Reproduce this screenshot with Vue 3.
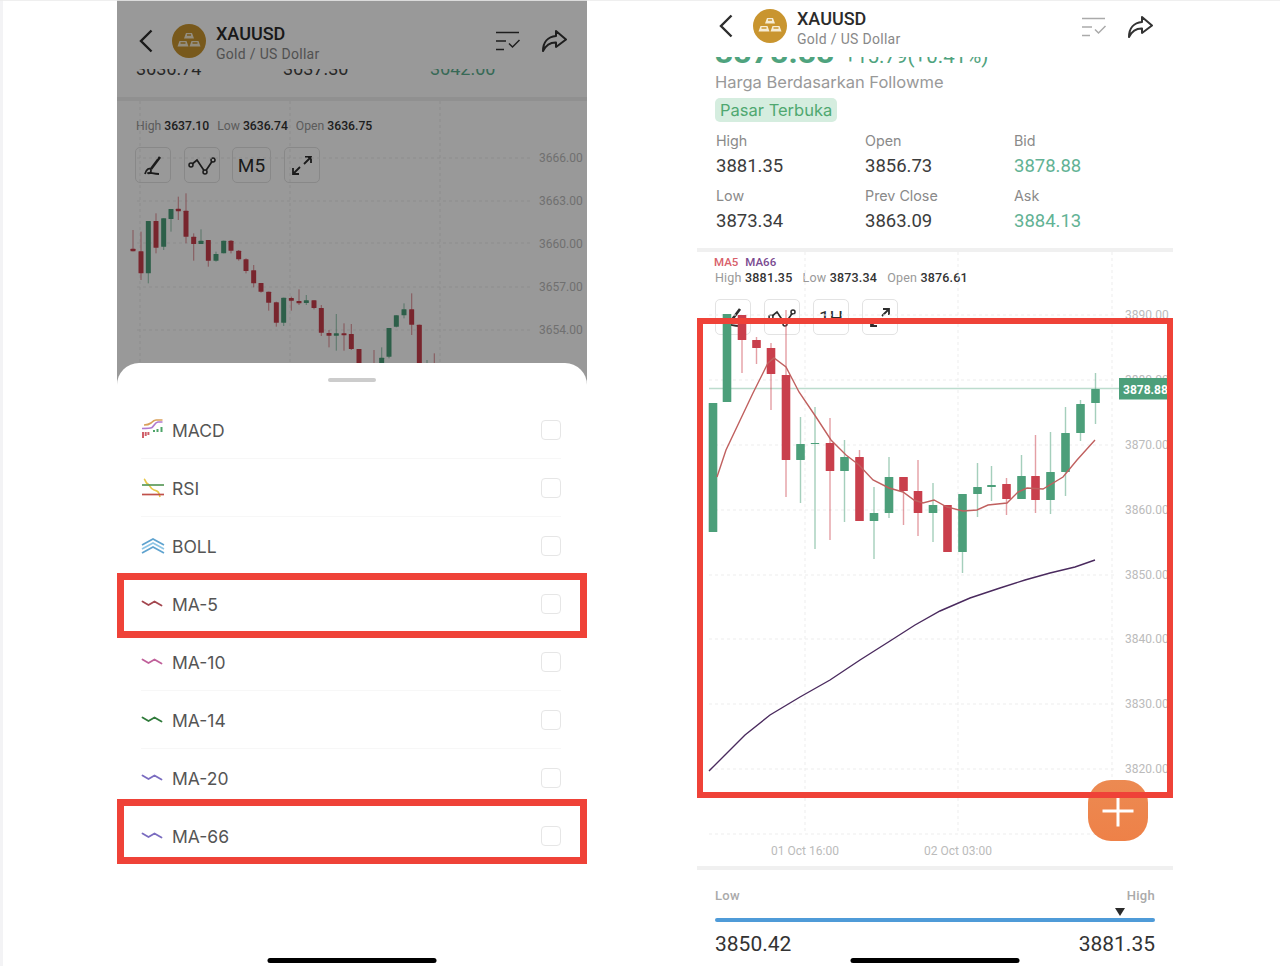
<template>
  <div class="page">
    <svg class="defs" aria-hidden="true">
      <symbol id="i-back" viewBox="0 0 14 24">
        <path d="M12.5 1.500 2 12l10.500 10.500" fill="none" stroke="currentColor" stroke-width="2.400" />
      </symbol>
      <symbol id="i-logo" viewBox="0 0 34 34">
        <circle cx="17" cy="17" r="17" fill="#c9952f" />
        <path d="M14 9h6l2 5.500H12z M7.500 17h7l2 5.500H5.500z M19.500 17h7l2 5.500h-11z" fill="#f6ecd4" />
        <path d="M15 11h4 M8.500 19h5 M20.500 19h5" stroke="#c9952f" stroke-width="1.400" />
      </symbol>
      <symbol id="i-list" viewBox="0 0 26 20">
        <path d="M1 1.500h23 M1 10h10 M1 18.500h8" fill="none" stroke="currentColor" stroke-width="1.700" />
        <path d="m14 12.500 3.500 3.500 7-7" fill="none" stroke="currentColor" stroke-width="1.500" />
      </symbol>
      <symbol id="i-share" viewBox="0 0 26 24">
        <path d="M15 2 25 10.500 15 18v-4.500C9 13.300 5 16 2 22 2 13 7 7.800 15 7z" fill="none" stroke="currentColor" stroke-width="2" stroke-linejoin="round" />
      </symbol>
      <symbol id="i-pen" viewBox="0 0 36 36">
        <path d="m25 10-9 12" fill="none" stroke="currentColor" stroke-width="2.600" />
        <path d="M10 27c1-5 5-7 6-4 .5 3-3 4-3 3 2-1 5 1 11 1" fill="none" stroke="currentColor" stroke-width="1.800" />
      </symbol>
      <symbol id="i-trend" viewBox="0 0 36 36">
        <path d="M7 18 13 13 21 25 29 13" fill="none" stroke="currentColor" stroke-width="1.700" />
        <circle cx="7" cy="18" r="2" fill="#fff" stroke="currentColor" stroke-width="1.500" />
        <circle cx="21" cy="25" r="2" fill="#fff" stroke="currentColor" stroke-width="1.500" />
        <circle cx="29" cy="13" r="2" fill="#fff" stroke="currentColor" stroke-width="1.500" />
      </symbol>
      <symbol id="i-expand" viewBox="0 0 36 36">
        <path d="M20 17 27 10 M21 10h6v6 M16 20l-7 7 M9 21v6h6" fill="none" stroke="currentColor" stroke-width="1.800" />
      </symbol>
    </svg>

    <!-- indicator picker -->
    <section class="phone">
      <div class="under">
        <header class="bar bar-tall">
          <svg class="back"><use href="#i-back" /></svg>
          <svg class="logo logo-tight"><use href="#i-logo" /></svg>
          <div class="title">
            <strong>XAUUSD</strong>
            <span>Gold / US Dollar</span>
          </div>
          <svg class="act act-list"><use href="#i-list" /></svg>
          <svg class="act"><use href="#i-share" /></svg>
        </header>
        <div class="clip-row">
          <span>3636.74</span>
          <span>3637.30</span>
          <span class="up">3642.00</span>
        </div>
        <div class="rule"></div>
        <div class="ohlc ohlc-left">
          <span>High <b>3637.10</b></span>
          <span>Low <b>3636.74</b></span>
          <span>Open <b>3636.75</b></span>
        </div>
        <div class="tools tools-left">
          <span class="tool"><svg><use href="#i-pen" /></svg></span>
          <span class="tool"><svg><use href="#i-trend" /></svg></span>
          <span class="tool tool-text">M5</span>
          <span class="tool"><svg><use href="#i-expand" /></svg></span>
        </div>
        <svg class="plot" viewBox="117 0 470 387">
          <g class="grid">
            <path v-for="y in [158, 201, 243, 287, 330]" :key="y" :d="`M137 ${y}H530`" />
            <path v-for="x in [140, 290, 440]" :key="x" :d="`M${x} 101V387`" />
          </g>
          <text v-for="t in leftAxis" :key="t.label" class="axis" x="539" :y="t.y">{{ t.label }}</text>
          <g v-for="c in leftCandles" :key="c.x" :class="c.up ? 'up' : 'down'">
            <rect class="wick" :x="c.x - 0.6" :y="c.wt" width="1.200" :height="c.wb - c.wt" />
            <rect :x="c.x - 2.500" :y="c.top" width="5" :height="c.h" rx="0.5" />
          </g>
        </svg>
        <div class="scrim"></div>
      </div>

      <div class="sheet">
        <div class="handle"></div>
        <div v-for="row in indicators" :key="row.name" class="row" :class="row.mark">
          <div class="row-in">
            <svg class="ind" viewBox="0 0 24 24">
              <g v-if="row.name === 'MACD'" fill="none" stroke-width="1.700">
                <path d="M3 7c3 0 5-.5 7-2 2-2 3-3 5-3h6.500" stroke="#d9a05a" />
                <path d="M1 10.500c4 0 8 0 10-1 2-1.500 3-5 6-5.500h4.500" stroke="#b07ad0" />
                <path d="M2 20v-6 M4.700 18v-4 M7.400 17v-3" stroke="#d0606a" stroke-width="2" />
                <path d="M13 14v-2 M16.500 14v-3 M20.500 14v-5" stroke="#4fa56a" stroke-width="2" />
              </g>
              <g v-else-if="row.name === 'RSI'" fill="none" stroke-width="1.700">
                <path d="M3 3c2 1 1 4 4 5 2 1 2 5 6 6 3 1 5 1 6 7" stroke="#e8c84a" />
                <path d="M1 9h22" stroke="#5a9a5a" />
                <path d="M1 18.500h22" stroke="#c0504a" />
              </g>
              <g v-else-if="row.name === 'BOLL'" fill="none" stroke-width="1.700">
                <path d="m1 11 11-6 11 6" stroke="#5fa3cf" />
                <path d="m1 15 11-6 11 6" stroke="#8ec6e6" />
                <path d="m1 19 11-6 11 6" stroke="#5fa3cf" />
              </g>
              <path v-else d="M1.500 9.500 7.500 13 13.500 9.500 20.500 13.500" fill="none" stroke-width="1.800" stroke-linejoin="round" stroke-linecap="round" :stroke="row.color" />
            </svg>
            <span class="ind-name">{{ row.name }}</span>
            <span class="check"></span>
          </div>
        </div>
      </div>
      <div class="home"></div>
    </section>

    <!-- quote detail -->
    <section class="phone">
      <header class="bar bar-short">
        <svg class="back"><use href="#i-back" /></svg>
        <svg class="logo"><use href="#i-logo" /></svg>
        <div class="title">
          <strong>XAUUSD</strong>
          <span>Gold / US Dollar</span>
        </div>
        <svg class="act act-list act-soft"><use href="#i-list" /></svg>
        <svg class="act"><use href="#i-share" /></svg>
      </header>
      <div class="price">
        <div class="price-in">
          <b>3878.88</b>
          <span>+15.79(+0.41%)</span>
        </div>
      </div>
      <p class="basis">Harga Berdasarkan Followme</p>
      <span class="status">Pasar Terbuka</span>
      <div class="stats">
        <div v-for="s in stats" :key="s.label">
          <label>{{ s.label }}</label>
          <p :class="{ up: s.up }">{{ s.value }}</p>
        </div>
      </div>
      <div class="rule rule-right"></div>

      <div class="chart">
        <div class="legend"><i class="ma5">MA5</i><i class="ma66">MA66</i></div>
        <div class="ohlc">
          <span>High <b>3881.35</b></span>
          <span>Low <b>3873.34</b></span>
          <span>Open <b>3876.61</b></span>
        </div>
        <div class="tools tools-right">
          <span class="tool"><svg><use href="#i-pen" /></svg></span>
          <span class="tool"><svg><use href="#i-trend" /></svg></span>
          <span class="tool tool-text">1H</span>
          <span class="tool"><svg><use href="#i-expand" /></svg></span>
        </div>
        <svg class="plot" viewBox="697 252 476 614">
          <g class="grid">
            <path v-for="t in rightAxis" :key="t.label" :d="`M709 ${t.y}H1115`" />
            <path d="M709 834H1115" />
            <path v-for="x in [805, 958, 1112]" :key="x" :d="`M${x} 252V834`" />
          </g>
          <text v-for="t in rightAxis" :key="t.label" class="axis" x="1125" :y="t.y + 4">{{ t.label }}</text>
          <text class="axis" x="805" y="855" text-anchor="middle">01 Oct 16:00</text>
          <text class="axis" x="958" y="855" text-anchor="middle">02 Oct 03:00</text>
          <path class="last-line" d="M709 388.500H1119" />
          <g v-for="c in rightCandles" :key="c[0]" :class="c[5] ? 'up' : 'down'">
            <rect class="wick" :x="c[0] - 0.7" :y="c[3]" width="1.400" :height="c[4] - c[3]" />
            <rect :x="c[0] - 4.300" :y="c[1]" width="8.600" :height="c[2] - c[1]" rx="0.5" />
          </g>
          <polyline class="line-ma5" :points="ma5" />
          <polyline class="line-ma66" :points="ma66" />
          <rect class="last-tag" x="1119" y="378" width="54" height="21.500" />
          <text class="last-text" x="1123" y="393.500">3878.88</text>
        </svg>
      </div>

      <div class="rule rule-right rule-low"></div>
      <div class="range">
        <div class="range-top"><span>Low</span><span>High</span></div>
        <div class="track">
          <i class="pointer" :style="{ left: pointerLeft }"></i>
        </div>
        <div class="range-values"><span>{{ low }}</span><span>{{ high }}</span></div>
      </div>

      <button class="fab" type="button" aria-label="Add"></button>
      <div class="frame"></div>
      <div class="home"></div>
    </section>
  </div>
</template>

<script setup>
const low = 3850.42;
const high = 3881.35;
const bid = 3878.88;
const pointerLeft = ((bid - low) / (high - low)) * 100 + '%';

const indicators = [
  { name: 'MACD' },
  { name: 'RSI' },
  { name: 'BOLL' },
  { name: 'MA-5', color: '#a3464e', mark: 'mark-a' },
  { name: 'MA-10', color: '#c0609a' },
  { name: 'MA-14', color: '#2f7a3a' },
  { name: 'MA-20', color: '#7a6cc0' },
  { name: 'MA-66', color: '#7a6cc0', mark: 'mark-b' },
];

const stats = [
  { label: 'High', value: '3881.35' },
  { label: 'Open', value: '3856.73' },
  { label: 'Bid', value: '3878.88', up: true },
  { label: 'Low', value: '3873.34' },
  { label: 'Prev Close', value: '3863.09' },
  { label: 'Ask', value: '3884.13', up: true },
];

const leftAxis = [
  { label: '3666.00', y: 162 },
  { label: '3663.00', y: 205 },
  { label: '3660.00', y: 248 },
  { label: '3657.00', y: 291 },
  { label: '3654.00', y: 334 },
];

const rightAxis = [
  { label: '3890.00', y: 315 },
  { label: '3880.00', y: 380 },
  { label: '3870.00', y: 445 },
  { label: '3860.00', y: 510 },
  { label: '3850.00', y: 575 },
  { label: '3840.00', y: 639 },
  { label: '3830.00', y: 704 },
  { label: '3820.00', y: 769 },
];

// x, top, bottom, wick top, wick bottom, up (read off the 3x crop, origin 117,190)
const leftRaw = [
  [48, 176, 184, 120, 184, 0], [72, 184, 250, 125, 270, 0], [94, 93, 250, 93, 280, 1],
  [117, 93, 173, 70, 190, 0], [140, 85, 170, 85, 180, 1], [162, 57, 87, 57, 125, 1],
  [184, 56, 64, 20, 90, 0], [207, 62, 140, 10, 160, 0], [230, 140, 162, 130, 212, 0],
  [252, 152, 162, 118, 162, 1], [274, 150, 212, 150, 230, 0], [297, 192, 212, 185, 215, 1],
  [320, 152, 190, 152, 190, 1], [342, 152, 182, 150, 190, 0], [365, 182, 208, 180, 212, 0],
  [387, 208, 243, 205, 250, 0], [410, 241, 280, 225, 292, 0], [432, 279, 305, 279, 308, 0],
  [455, 305, 338, 305, 362, 0], [478, 337, 398, 335, 410, 0], [500, 323, 398, 323, 408, 1],
  [523, 324, 332, 320, 362, 0], [546, 333, 340, 298, 345, 0], [568, 331, 339, 315, 345, 1],
  [591, 331, 354, 331, 358, 0], [613, 354, 428, 345, 438, 0], [636, 429, 437, 420, 472, 0],
  [658, 430, 437, 372, 482, 1], [681, 430, 433, 400, 482, 0], [703, 432, 477, 402, 480, 0],
  [726, 477, 560, 477, 560, 0], [771, 540, 560, 480, 560, 0], [794, 503, 560, 472, 560, 1],
  [816, 414, 500, 414, 505, 1], [838, 376, 410, 376, 412, 1], [861, 358, 376, 340, 385, 1],
  [884, 358, 404, 310, 435, 0], [907, 404, 560, 404, 560, 0], [930, 540, 560, 510, 560, 1],
  [952, 540, 560, 490, 560, 0],
];
const leftCandles = leftRaw.map(([x, t, b, wt, wb, up]) => ({
  x: 117 + x / 3,
  top: 190 + t / 3,
  h: Math.max((b - t) / 3, 2),
  wt: 190 + wt / 3,
  wb: 190 + wb / 3,
  up,
}));

// x, top, bottom, wick top, wick bottom, up
const rightCandles = [
  [713, 403, 532, 403, 532, 1], [727, 314, 402, 314, 402, 1], [742, 315, 340, 315, 373, 0],
  [756.5, 340, 348, 337, 364, 0], [771, 348, 374, 343, 410, 0], [786, 375, 460, 310, 497, 0],
  [800.5, 444, 460, 417, 503, 1], [815, 443, 444, 407, 549, 1], [830, 443, 471, 418, 540, 0],
  [844.5, 457, 471, 440, 522, 1], [859.5, 457, 521, 450, 521, 0], [874, 513, 521, 487, 559, 1],
  [889, 477, 513, 457, 518, 1], [903.500, 477, 491, 477, 525, 0], [918, 491, 513, 460, 536, 0],
  [933, 505, 513, 483, 542, 1], [947.5, 505, 552, 505, 552, 0], [962.5, 494, 552, 494, 573, 1],
  [977.5, 487, 494, 463, 517, 1], [991.5, 485, 487, 466, 501, 1], [1006.5, 484, 499, 478, 515, 0],
  [1021.5, 476, 499, 455, 499, 1], [1035.5, 476, 500, 435, 513, 0], [1050.5, 472, 500, 432, 514, 1],
  [1065.5, 433, 472, 407, 496, 1], [1080.5, 404, 433, 400, 441, 1], [1095.5, 389, 403, 373, 424, 1],
];

const ma5 = '717,477 726,450 753,393 768,363 774,358 786,367 799,392 816,417 831,440 846,455 859,465 873,480 889,488 903,492 914,500 923,503 934,500 947,507 963,511 977,510 988,505 1007,503 1018,492 1027,488 1043,489 1063,477 1077,460 1095,440';
const ma66 = '709,771 725,755 745,735 770,715 800,697 830,680 860,660 890,641 915,625 940,611 970,598 1000,588 1025,580 1050,573 1075,567 1095,560';
</script>

<style>
html,
body {
  background: #fff;
}
</style>

<style scoped>
.page {
  position: relative;
  width: 1280px;
  height: 966px;
  overflow: hidden;
  display: flex;
  gap: 110px;
  padding-left: 117px;
  box-sizing: border-box;
  background: #fff;
  box-shadow: inset 3px 0 0 #f3f3f5;
  font-family: Roboto, 'Noto Sans', sans-serif;
  color: #333;
}

/* the capture's own hairline along the top */
.page::after {
  content: '';
  position: absolute;
  top: 0;
  left: 0;
  right: 0;
  z-index: 9;
  height: 1px;
  background: rgba(235, 235, 235, 0.8);
}

.defs {
  position: absolute;
  width: 0;
  height: 0;
}

.phone {
  position: relative;
  display: flex;
  flex-direction: column;
  width: 470px;
  height: 966px;
  background: #fff;
}

.phone + .phone {
  width: 476px;
}

.under {
  position: relative;
  height: 387px;
  margin-bottom: -24px;
  overflow: hidden;
  flex: none;
}

.scrim {
  position: absolute;
  inset: 0;
  z-index: 3;
  background: rgba(0, 0, 0, 0.4);
}

.plot {
  position: absolute;
  top: 0;
  left: 0;
  width: 100%;
  height: 100%;
  pointer-events: none;
}

/* header */
.bar {
  display: flex;
  align-items: center;
  box-sizing: border-box;
  padding-left: 22px;
  padding-right: 20px;
  background: #fff;
}

.bar-tall {
  height: 69px;
  padding-top: 13px;
}

.bar-tall .title {
  padding-top: 5px;
}

.bar-short {
  height: 57px;
  align-items: flex-start;
  padding-top: 9px;
}

.back {
  width: 14px;
  height: 24px;
  color: #2e2e2e;
  flex: none;
}

.bar-short .back {
  margin-top: 5px;
}

.logo {
  width: 34px;
  height: 34px;
  margin-left: 20px;
  flex: none;
}

.logo-tight {
  margin-left: 19px;
}

.title {
  display: flex;
  flex-direction: column;
  margin-left: 10px;
  margin-right: auto;
  padding-top: 1px;
}

.title strong {
  font-size: 18px;
  line-height: 18px;
  font-weight: 500;
  color: #2b2b2b;
}

.title span {
  margin-top: 2px;
  font-size: 14px;
  line-height: 18px;
  letter-spacing: 0.3px;
  color: #888;
}

.act {
  width: 26px;
  height: 24px;
  color: #333;
  flex: none;
}

.act-list {
  margin-right: 20px;
}

.bar-short .act {
  margin-top: 6px;
}

.act-soft {
  color: #aaa;
}

.clip-row {
  display: grid;
  grid-template-columns: repeat(3, 147px);
  height: 28px;
  overflow: hidden;
  padding-left: 19px;
  font-size: 18px;
  line-height: 22px;
  color: #444;
}

.clip-row span {
  margin-top: -11px;
}

.clip-row .up {
  color: #5cb090;
}

.rule {
  height: 4px;
  background: #f0f0f0;
}

.rule-right {
  margin-top: 15px;
}

.rule-low {
  margin-top: 0;
}

/* O/H/L line */
.ohlc {
  display: flex;
  gap: 10px;
  padding-left: 18px;
  margin-top: 3px;
  font-size: 12.5px;
  line-height: 14px;
  letter-spacing: 0.2px;
  color: #999;
}

.ohlc-left {
  margin-top: 18px;
  padding-left: 19px;
  gap: 8px;
  font-size: 12.2px;
  letter-spacing: 0;
}

.ohlc b {
  font-weight: 500;
  color: #333;
}

.tools {
  display: flex;
  margin-top: 14px;
  padding-left: 18px;
}

.tools-left {
  gap: 12.5px;
}

.tools-right {
  gap: 13px;
}

.tool {
  display: flex;
  align-items: center;
  justify-content: center;
  width: 36px;
  height: 36px;
  box-sizing: border-box;
  border: 1.5px solid #e3e3e3;
  border-radius: 5px;
  color: #2e2e2e;
  font-size: 19px;
}

.tool svg {
  width: 36px;
  height: 36px;
  flex: none;
}

.tools-left .tool-text {
  width: 39px;
}

/* chart */
.grid path {
  fill: none;
  stroke: #ededed;
  stroke-width: 1;
  stroke-dasharray: 3 3;
}

.axis {
  font-size: 12px;
  fill: #bbb;
}

.wick {
  opacity: 0.5;
}

.up rect {
  fill: #4c9f7a;
}

.down rect {
  fill: #c93f4c;
}

.last-line {
  fill: none;
  stroke: #bcdccd;
  stroke-width: 1.4;
}

.line-ma5 {
  fill: none;
  stroke: #c0605f;
  stroke-width: 1.4;
}

.line-ma66 {
  fill: none;
  stroke: #4a2a5e;
  stroke-width: 1.4;
}

.last-tag {
  fill: #4c9f7a;
}

.last-text {
  font-size: 12px;
  font-weight: 700;
  fill: #fff;
}

/* bottom sheet */
.sheet {
  position: relative;
  z-index: 4;
  flex: 1;
  padding-top: 15px;
  background: #fff;
  border-radius: 22px 22px 0 0;
}

.handle {
  width: 48px;
  height: 4px;
  margin: 0 auto 19px;
  border-radius: 2px;
  background: #ccc;
}

.row {
  position: relative;
  padding: 0 26px 0 24px;
}

.row-in {
  display: flex;
  align-items: center;
  height: 58px;
  box-sizing: border-box;
  border-bottom: 1px solid #f7f7f7;
}

.row:nth-last-child(2) .row-in,
.row:last-child .row-in {
  border-bottom: none;
}

.mark-a::after,
.mark-b::after {
  content: '';
  position: absolute;
  left: 0;
  right: 0;
  border: 7px solid #ef4238;
}

.mark-a::after {
  top: -2px;
  bottom: -5px;
}

.mark-b::after {
  top: -8px;
  bottom: 1px;
}

.ind {
  width: 24px;
  height: 24px;
  flex: none;
}

.ind-name {
  margin-left: 7px;
  margin-right: auto;
  padding-top: 1px;
  font-family: Inter, Roboto, sans-serif;
  font-size: 17.5px;
  color: #555;
}

.check {
  width: 20px;
  height: 20px;
  box-sizing: border-box;
  border: 1.5px solid #e6e6e6;
  border-radius: 4px;
}

/* quote */
.price {
  height: 15px;
  overflow: hidden;
  padding-left: 18px;
}

.price-in {
  display: flex;
  align-items: baseline;
  gap: 10px;
  margin-top: -21px;
  color: #4fa37e;
  line-height: 32px;
}

.price-in b {
  font-size: 32px;
  font-weight: 700;
}

.price-in span {
  font-size: 20.5px;
}

.basis {
  margin: 0;
  padding-left: 18px;
  font-family: Inter, Roboto, sans-serif;
  font-size: 16.5px;
  line-height: 20px;
  color: #999;
}

.status {
  align-self: flex-start;
  margin: 6px 0 0 18px;
  padding: 0 5px;
  height: 24px;
  line-height: 24px;
  border-radius: 5px;
  background: #d5eddf;
  color: #4fa870;
  font-family: Inter, Roboto, sans-serif;
  font-size: 16.5px;
}

.stats {
  display: grid;
  grid-template-columns: 149px 149px 1fr;
  row-gap: 9px;
  margin-top: 10px;
  padding-left: 19px;
}

.stats label {
  display: block;
  font-family: Inter, Roboto, sans-serif;
  font-size: 14.3px;
  line-height: 18px;
  color: #8a8a8a;
}

.stats p {
  margin: 4px 0 0;
  font-size: 18.5px;
  line-height: 24px;
  color: #3c3c3c;
}

.stats p.up {
  color: #62b294;
}

.chart {
  position: relative;
  flex: 1;
  min-height: 0;
  padding-top: 4px;
}

.legend {
  display: flex;
  gap: 7px;
  padding-left: 17px;
  font-size: 11.5px;
  line-height: 12px;
}

.legend i {
  font-style: normal;
  font-weight: 500;
}

.ma5 {
  color: #d8606a;
}

.ma66 {
  color: #7a4a90;
}

.range {
  padding: 19px 18px 0;
  height: 96px;
  box-sizing: border-box;
}

.range-top {
  display: flex;
  justify-content: space-between;
  font-size: 13px;
  line-height: 14px;
  letter-spacing: 0.3px;
  font-weight: 500;
  color: #aaa;
}

.track {
  position: relative;
  height: 4px;
  margin-top: 15px;
  border-radius: 2px;
  background: #4f9bd8;
}

.pointer {
  position: absolute;
  top: -10px;
  margin-left: -5px;
  width: 0;
  height: 0;
  border-style: solid;
  border-width: 8px 5px 0;
  border-color: #2b2b2b transparent transparent;
}

.range-values {
  display: flex;
  justify-content: space-between;
  margin-top: 9px;
  font-size: 21px;
  line-height: 26px;
  color: #333;
}

.fab {
  position: absolute;
  top: 780px;
  right: 25px;
  width: 60px;
  height: 61px;
  padding: 0;
  border: none;
  border-radius: 23px;
  background: linear-gradient(180deg, #ec8a52, #ee8148);
}

.fab::before,
.fab::after {
  content: '';
  position: absolute;
  left: 50%;
  top: 50%;
  background: #fff;
  transform: translate(-50%, -50%);
}

.fab::before {
  width: 31px;
  height: 3px;
}

.fab::after {
  width: 3px;
  height: 31px;
}

.frame {
  position: absolute;
  top: 318px;
  left: 0;
  right: 0;
  height: 480px;
  box-sizing: border-box;
  border: 6px solid #ef4238;
}

.home {
  position: absolute;
  left: 50%;
  bottom: 3px;
  z-index: 5;
  width: 169px;
  height: 5px;
  border-radius: 3px;
  background: #000;
  transform: translateX(-50%);
}
</style>
